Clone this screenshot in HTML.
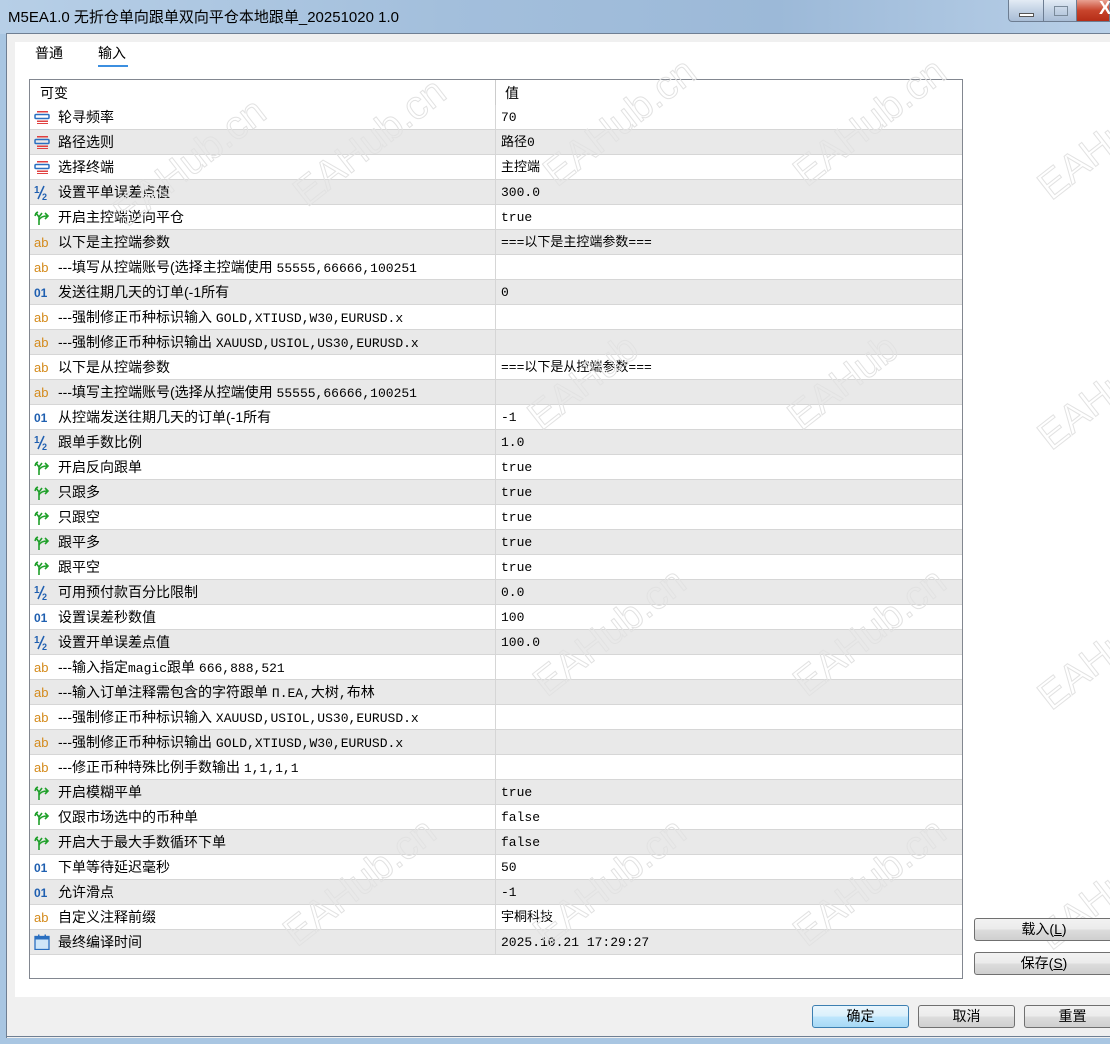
<!DOCTYPE html>
<html><head><meta charset="utf-8"><style>
*{margin:0;padding:0;box-sizing:border-box}
body{width:1110px;height:1044px;overflow:hidden;background:#a9c6e2;position:relative;font-family:"Liberation Sans","Noto Sans CJK SC",sans-serif}
.title{position:absolute;left:0;top:0;width:1110px;height:34px;background:linear-gradient(90deg,#b7cfe7,#a3bfdc 40%,#9cb9d8 70%,#b9d0e8);}
.title span{position:absolute;left:8px;top:6px;font-size:15px;color:#000}
.wb{position:absolute;top:0;height:22px;border:1px solid #6d7d92;border-top:none;background:linear-gradient(#e3ebf5,#c3d2e4 50%,#a9bdd6)}
.frame{position:absolute;left:6px;top:33px;width:1104px;height:1005px;background:#f0f0f0;border-left:1px solid #6f7f93;border-top:1px solid #6f7f93}
.panel{position:absolute;left:15px;top:42px;width:1095px;height:955px;background:#fff}
.tab{position:absolute;top:43px;font-size:14px;color:#000}
.tbl{position:absolute;left:29px;top:79px;width:934px;height:900px;border:1px solid #828790;background:#fff;overflow:hidden}
.row{position:absolute;left:0;width:932px;height:25px;border-bottom:1px solid #d6d6d6;font-size:14px;color:#000}
.row.g{background:#e9e9e9}
.n{position:absolute;left:28px;top:2px;white-space:nowrap}
.v{position:absolute;left:465px;top:0;height:24px;border-left:1px solid #d6d6d6;padding-left:5px;line-height:26px;font-family:"Liberation Mono","Noto Sans CJK SC",monospace;font-size:13px;white-space:nowrap}
.m{font-family:"Liberation Mono",monospace;font-size:13px}
.ic{position:absolute;left:4px;top:4px;width:16px;height:16px}
.btn{position:absolute;height:23px;border:1px solid #707070;border-radius:3px;background:linear-gradient(#f2f2f2,#ebebeb 50%,#dddddd 51%,#cfcfcf);font-size:14px;text-align:center;line-height:21px;color:#000}
.wm{position:absolute;font-size:40px;color:transparent;-webkit-text-stroke:1px #e2e2e2;transform:rotate(-38deg);font-family:"Liberation Sans",sans-serif;white-space:nowrap}
</style></head><body>
<div class="title"><span>M5EA1.0 无折仓单向跟单双向平仓本地跟单_20251020 1.0</span></div>
<div class="wb" style="left:1008px;width:36px;border-radius:0 0 0 4px"><div style="position:absolute;left:10px;top:13px;width:15px;height:4px;background:#fff;border:1px solid #555"></div></div>
<div class="wb" style="left:1043px;width:34px"><div style="position:absolute;left:10px;top:6px;width:14px;height:10px;border:1px solid #7a8a9a"></div></div>
<div class="wb" style="left:1076px;width:34px;background:linear-gradient(#e8a192,#c8442c 50%,#b52d17)"><span style="position:absolute;left:22px;top:-2px;color:#fff;font-weight:bold;font-size:18px">X</span></div>
<div class="frame"></div>
<div class="panel"></div>
<div class="tab" style="left:35px">普通</div>
<div class="tab" style="left:98px">输入</div>
<div style="position:absolute;left:98px;top:65px;width:30px;height:2px;background:#3c8fe0"></div>

<div class="tbl">
<div style="position:absolute;left:0;top:0;width:932px;height:25px;font-size:14px"><span style="position:absolute;left:10px;top:3px">可变</span><span style="position:absolute;left:465px;top:0;height:25px;border-left:1px solid #ccc"></span><span style="position:absolute;left:475px;top:3px">值</span></div>
<div id="rows"></div>
</div>

<svg width="0" height="0" style="position:absolute">
<defs>
<g id="i-enum"><rect x="3" y="2" width="11" height="1.5" fill="#e04040"/><rect x="1" y="5.5" width="14" height="4" rx="1" fill="none" stroke="#2a6fc0" stroke-width="1.5"/><rect x="3" y="11.5" width="11" height="1.5" fill="#e04040"/><rect x="3" y="14" width="11" height="1" fill="#e04040"/></g>
<g id="i-half"><text x="0" y="9" font-size="10" fill="#1f5fb0" font-weight="bold" font-family="Liberation Sans">1</text><line x1="10" y1="2" x2="4" y2="15" stroke="#1f5fb0" stroke-width="1.5"/><text x="8" y="16" font-size="9" fill="#1f5fb0" font-weight="bold" font-family="Liberation Sans">2</text></g>
<g id="i-bool" fill="none" stroke="#1fa02a" stroke-width="1.6"><path d="M5 16 L5 8 L2 4 M5 8 L8 4 M2 4 L1 7 M2 4 L4 3"/><path d="M5 11 Q7 7 13 7 M11 4 L14 7 L11 10"/></g>
<g id="i-ab"><text x="0" y="13" font-size="13" fill="#d48a1a" font-family="Liberation Sans">ab</text></g>
<g id="i-int"><text x="0" y="13" font-size="12" fill="#1f5fb0" font-family="Liberation Sans" font-weight="bold">01</text></g>
<g id="i-cal"><rect x="1" y="2.5" width="14" height="13" fill="#cfe6f8" stroke="#2a6fc0" stroke-width="1.3"/><rect x="1" y="2.5" width="14" height="3" fill="#2a6fc0"/><rect x="4" y="0.5" width="1.5" height="3" fill="#2a6fc0"/><rect x="10.5" y="0.5" width="1.5" height="3" fill="#2a6fc0"/></g>
</defs></svg>

<div class="wm" style="left:100px;top:140px">EAHub.cn</div>
<div class="wm" style="left:280px;top:120px">EAHub.cn</div>
<div class="wm" style="left:530px;top:100px">EAHub.cn</div>
<div class="wm" style="left:780px;top:100px">EAHub.cn</div>
<div class="wm" style="left:1030px;top:130px">EAHub</div>
<div class="wm" style="left:520px;top:360px">EAHub</div>
<div class="wm" style="left:780px;top:360px">EAHub</div>
<div class="wm" style="left:1030px;top:380px">EAHub</div>
<div class="wm" style="left:520px;top:610px">EAHub.cn</div>
<div class="wm" style="left:780px;top:610px">EAHub.cn</div>
<div class="wm" style="left:1030px;top:640px">EAHub</div>
<div class="wm" style="left:270px;top:860px">EAHub.cn</div>
<div class="wm" style="left:520px;top:860px">EAHub.cn</div>
<div class="wm" style="left:780px;top:860px">EAHub.cn</div>
<div class="wm" style="left:1030px;top:880px">EAHub</div>

<div class="btn" style="left:974px;top:918px;width:140px">载入(<u>L</u>)</div>
<div class="btn" style="left:974px;top:952px;width:140px">保存(<u>S</u>)</div>
<div class="btn" style="left:812px;top:1005px;width:97px;border-color:#3c7fb1;background:linear-gradient(#eaf6fd,#d9f0fc 50%,#bee6fd 51%,#a7d9f5)">确定</div>
<div class="btn" style="left:918px;top:1005px;width:97px">取消</div>
<div class="btn" style="left:1024px;top:1005px;width:97px">重置</div>
<div style="position:absolute;left:6px;top:1036px;width:1104px;height:1px;background:#6f7f93"></div>

<script>
var R=[
["enum","轮寻频率","70"],["enum","路径选则","路径0"],["enum","选择终端","主控端"],["half","设置平单误差点值","300.0"],["bool","开启主控端逆向平仓","true"],["ab","以下是主控端参数","===以下是主控端参数==="],
["ab","---填写从控端账号(选择主控端使用 <span class=m>55555,66666,100251</span>",""],["int","发送往期几天的订单(-1所有","0"],
["ab","---强制修正币种标识输入 <span class=m>GOLD,XTIUSD,W30,EURUSD.x</span>",""],["ab","---强制修正币种标识输出 <span class=m>XAUUSD,USIOL,US30,EURUSD.x</span>",""],
["ab","以下是从控端参数","===以下是从控端参数==="],["ab","---填写主控端账号(选择从控端使用 <span class=m>55555,66666,100251</span>",""],
["int","从控端发送往期几天的订单(-1所有","-1"],["half","跟单手数比例","1.0"],["bool","开启反向跟单","true"],["bool","只跟多","true"],["bool","只跟空","true"],["bool","跟平多","true"],["bool","跟平空","true"],
["half","可用预付款百分比限制","0.0"],["int","设置误差秒数值","100"],["half","设置开单误差点值","100.0"],
["ab","---输入指定<span class=m>magic</span>跟单 <span class=m>666,888,521</span>",""],["ab","---输入订单注释需包含的字符跟单 <span class=m>Π.EA,</span>大树<span class=m>,</span>布林",""],
["ab","---强制修正币种标识输入 <span class=m>XAUUSD,USIOL,US30,EURUSD.x</span>",""],["ab","---强制修正币种标识输出 <span class=m>GOLD,XTIUSD,W30,EURUSD.x</span>",""],
["ab","---修正币种特殊比例手数输出 <span class=m>1,1,1,1</span>",""],["bool","开启模糊平单","true"],["bool","仅跟市场选中的币种单","false"],["bool","开启大于最大手数循环下单","false"],
["int","下单等待延迟毫秒","50"],["int","允许滑点","-1"],["ab","自定义注释前缀","宇桐科技"],["cal","最终编译时间","2025.10.21 17:29:27"]];
var h="";R.forEach(function(r,i){h+='<div class="row'+(i%2?' g':'')+'" style="top:'+(25+i*25)+'px"><svg class="ic" viewBox="0 0 16 16"><use href="#i-'+r[0]+'"/></svg><span class="n">'+r[1]+'</span><span class="v">'+r[2]+'</span></div>';});
document.getElementById("rows").innerHTML=h;
</script>
</body></html>
